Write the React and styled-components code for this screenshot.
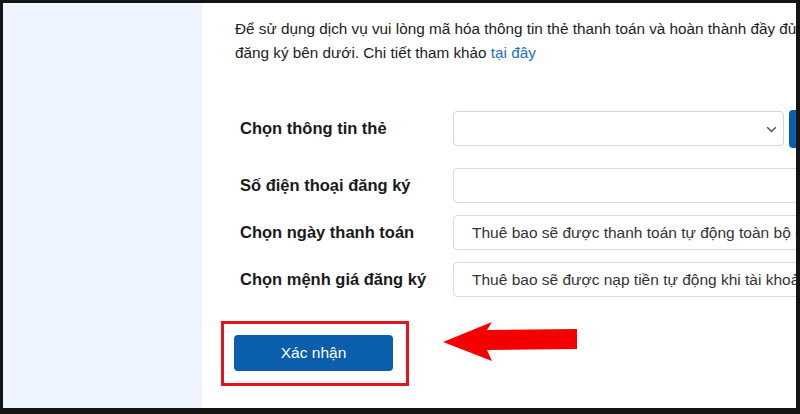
import React from "react";
import styled, { createGlobalStyle } from "styled-components";

const GlobalStyle = createGlobalStyle`
    html, body {
        margin: 0;
        padding: 0;
        background: #141414;
    }
    body {
        font-family: "Liberation Sans", Arial, sans-serif;
    }
`;

const rows = [
    { label: "Chọn thông tin thẻ", kind: "select" },
    { label: "Số điện thoại đăng ký", kind: "input" },
    { label: "Chọn ngày thanh toán", kind: "input", value: "Thuê bao sẽ được thanh toán tự động toàn bộ nợ cước" },
    { label: "Chọn mệnh giá đăng ký", kind: "input", value: "Thuê bao sẽ được nạp tiền tự động khi tài khoản chính" },
];

const App = () => {
    return (
        <Frame>
            <GlobalStyle />
            <Sidebar />
            <Main>
                <Intro>
                    Để sử dụng dịch vụ vui lòng mã hóa thông tin thẻ thanh toán và hoàn thành đầy đủ, các thông tin
                    <br />
                    đăng ký bên dưới. Chi tiết tham khảo <Link>tại đây</Link>
                </Intro>

                <Form>
                    {rows.map((row, i) => (
                        <Row key={row.label} $first={i === 0}>
                            <Label>{row.label}</Label>
                            {row.kind === "select" ? (
                                <SelectWrap>
                                    <Select>
                                        <Chevron width="11" height="7" viewBox="0 0 11 7">
                                            <polyline points="1.2,1.2 5.5,5.5 9.8,1.2" fill="none" stroke="#555" strokeWidth="1.5" />
                                        </Chevron>
                                    </Select>
                                    <SideButton />
                                </SelectWrap>
                            ) : (
                                <Field>{row.value}</Field>
                            )}
                        </Row>
                    ))}
                </Form>

                <Actions>
                    <Highlight>
                        <Submit>Xác nhận</Submit>
                    </Highlight>
                    <Arrow width="136" height="44" viewBox="0 0 136 44">
                        <polygon points="0,22 49,2 44,10 134,9 134,29 44,30 49,41" fill="#f50000" />
                    </Arrow>
                </Actions>
            </Main>
        </Frame>
    );
};

const Frame = styled.div`
    display: flex;
    height: 414px;
    box-sizing: border-box;
    padding: 3px 4px 6px 3px;
    background: #141414;
`;

const Sidebar = styled.div`
    width: 199px;
    flex-shrink: 0;
    background: #eef4fd;
`;

const Main = styled.div`
    flex: 1;
    background: #fff;
    overflow: hidden;
    padding: 14px 0 0 33px;
    box-sizing: border-box;
`;

const Intro = styled.p`
    margin: 0;
    white-space: nowrap;
    font-size: 15.3px;
    line-height: 24px;
    color: #1d1d1d;
`;

const Link = styled.span`
    color: #1f72c0;
`;

const Form = styled.div`
    margin-top: 46px;
    padding-left: 5px;
    display: flex;
    flex-direction: column;
`;

const Row = styled.div`
    display: flex;
    align-items: center;
    height: 35px;
    margin-bottom: ${(p) => (p.$first ? "22px" : "12px")};
`;

const Label = styled.div`
    width: 213px;
    flex-shrink: 0;
    font-size: 16.5px;
    font-weight: 700;
    color: #1a1a1a;
`;

const SelectWrap = styled.div`
    display: flex;
    align-items: center;
    gap: 5px;
    height: 100%;
`;

const Select = styled.div`
    position: relative;
    width: 331px;
    height: 35px;
    box-sizing: border-box;
    border: 1px solid #d6d6d6;
    border-radius: 4px;
    background: #fff;
`;

const Chevron = styled.svg`
    position: absolute;
    right: 6px;
    top: 14px;
`;

const SideButton = styled.div`
    width: 40px;
    height: 38px;
    flex-shrink: 0;
    border-radius: 4px;
    background: #0b5eac;
`;

const Field = styled.div`
    width: 420px;
    height: 35px;
    flex-shrink: 0;
    box-sizing: border-box;
    border: 1px solid #d9d9d9;
    border-radius: 4px;
    padding: 0 18px;
    display: flex;
    align-items: center;
    font-size: 15.5px;
    color: #333;
    white-space: nowrap;
    overflow: hidden;
`;

const Actions = styled.div`
    margin-top: 12px;
    display: flex;
    align-items: flex-start;
`;

const Highlight = styled.div`
    margin-left: -14px;
    padding: 11px 13px 12px 10px;
    border: 3px solid #e3141b;
`;

const Submit = styled.button`
    width: 159px;
    height: 36px;
    border: none;
    border-radius: 4px;
    background: #0b5eac;
    color: #fff;
    font-family: "Liberation Sans", Arial, sans-serif;
    font-size: 15.5px;
    cursor: pointer;
`;

const Arrow = styled.svg`
    margin: -1px 0 0 34px;
`;

export default App;
